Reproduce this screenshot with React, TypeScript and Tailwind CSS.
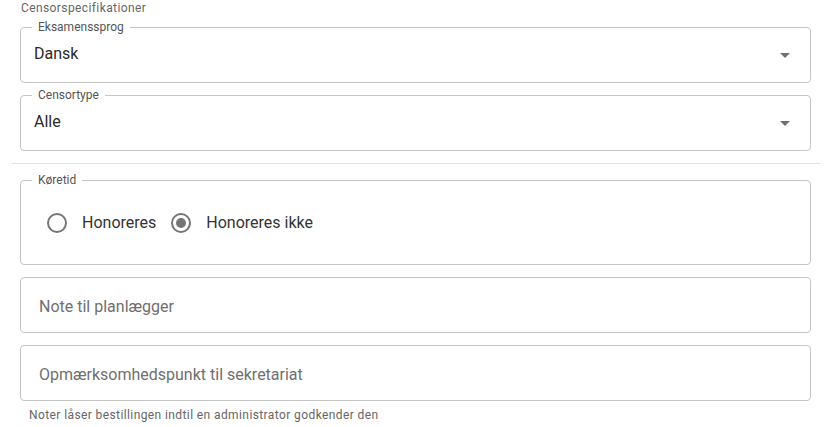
import { useState } from "react";

function SelectField({ label, value }: { label: string; value: string }) {
  return (
    <fieldset className="rounded-[4px] border border-[#c4c4c4] px-[11px]">
      <legend className="px-[6px] text-[12px] leading-[14px] text-[#555]">
        {label}
      </legend>
      <div className="flex h-[48px] items-start justify-between pt-[8px] pl-[2px] pr-[9px]">
        <span className="text-[16px] leading-[24px] text-[#2a2a2a]">{value}</span>
        <span className="mt-[11px] h-0 w-0 border-x-[5px] border-t-[5px] border-x-transparent border-t-[#707070]" />
      </div>
    </fieldset>
  );
}

function Radio({ checked, label, onClick }: { checked: boolean; label: string; onClick: () => void }) {
  return (
    <button type="button" onClick={onClick} className="flex items-center">
      <span className="flex h-[20px] w-[20px] items-center justify-center rounded-full border-2 border-[#757575]">
        {checked && <span className="h-[10px] w-[10px] rounded-full bg-[#757575]" />}
      </span>
      <span className="ml-[15px] text-[16px] leading-[24px] text-[#333]">{label}</span>
    </button>
  );
}

function TextBox({ placeholder }: { placeholder: string }) {
  return (
    <div className="h-[56px] rounded-[4px] border border-[#c4c4c4]">
      <input
        placeholder={placeholder}
        className="h-full w-full bg-transparent pt-[2px] pl-[18px] text-[16px] text-[#222] outline-none placeholder:text-[#6f6f6f]"
      />
    </div>
  );
}

export default function App() {
  const [paid, setPaid] = useState(false);

  return (
    <div className="h-[427px] w-[828px] overflow-hidden bg-white font-['Roboto',sans-serif]">
      <div className="pl-5 pr-[17px]">
        <p className="pt-[1px] pl-[1px] text-[12px] leading-[14px] tracking-[0.4px] text-[#666]">
          Censorspecifikationer
        </p>

        <div className="mt-[5px]">
          <SelectField label="Eksamenssprog" value="Dansk" />
        </div>
        <div className="mt-[5px]">
          <SelectField label="Censortype" value="Alle" />
        </div>

        <div className="-ml-2 mt-[12px] h-px w-[808px] bg-[#e0e0e0]" />

        <fieldset className="mt-[9px] rounded-[4px] border border-[#c4c4c4] px-[11px]">
          <legend className="px-[6px] text-[12px] leading-[14px] text-[#555]">
            Køretid
          </legend>
          <div className="flex h-[77px] items-center gap-[15px] pb-[5px] pl-[15px]">
            <Radio checked={paid} label="Honoreres" onClick={() => setPaid(true)} />
            <Radio checked={!paid} label="Honoreres ikke" onClick={() => setPaid(false)} />
          </div>
        </fieldset>

        <div className="mt-[12px]">
          <TextBox placeholder="Note til planlægger" />
        </div>
        <div className="mt-[12px]">
          <TextBox placeholder="Opmærksomhedspunkt til sekretariat" />
        </div>

        <p className="mt-[7px] pl-[9px] text-[12px] leading-[14px] tracking-[0.4px] text-[#666]">
          Noter låser bestillingen indtil en administrator godkender den
        </p>
      </div>
    </div>
  );
}
